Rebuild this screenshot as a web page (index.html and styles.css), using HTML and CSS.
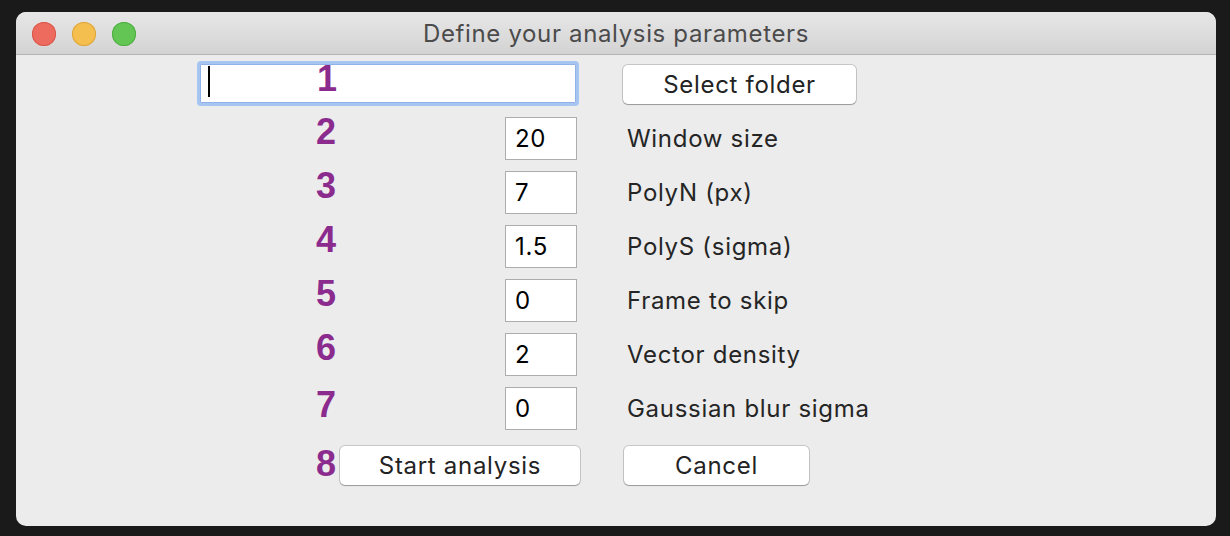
FILE: index.html
```html
<!DOCTYPE html>
<html lang="en">
<head>
<meta charset="utf-8">
<title>Define your analysis parameters</title>
<link rel="stylesheet" href="styles.css">
</head>
<body>
<div class="window">
  <div class="titlebar">
    <div class="lights">
      <span class="light light-close"></span>
      <span class="light light-min"></span>
      <span class="light light-max"></span>
    </div>
    <div class="title">Define your analysis parameters</div>
    <div></div>
  </div>
  <div class="form">
    <div class="pathfield"><span class="caret"></span></div>
    <div class="num num-1">1</div>
    <button class="btn btn-folder">Select folder</button>

    <div class="num">2</div>
    <div class="field">20</div>
    <div class="label">Window size</div>

    <div class="num">3</div>
    <div class="field">7</div>
    <div class="label">PolyN (px)</div>

    <div class="num">4</div>
    <div class="field">1.5</div>
    <div class="label">PolyS (sigma)</div>

    <div class="num">5</div>
    <div class="field">0</div>
    <div class="label">Frame to skip</div>

    <div class="num">6</div>
    <div class="field">2</div>
    <div class="label">Vector density</div>

    <div class="num num-7">7</div>
    <div class="field">0</div>
    <div class="label">Gaussian blur sigma</div>

    <div class="num num-8">8</div>
    <button class="btn btn-start">Start analysis</button>
    <button class="btn btn-cancel">Cancel</button>
  </div>
</div>
</body>
</html>
```

FILE: styles.css
```css
* { box-sizing: border-box; }

body {
  margin: 0;
  padding: 12px 14px 10px 16px;
  background: #1a1a1a;
  font-family: "Inter", "Liberation Sans", sans-serif;
}

.window {
  width: 1200px;
  height: 514px;
  border-radius: 10px;
  overflow: hidden;
  background: #ececec;
  display: flex;
  flex-direction: column;
}

.titlebar {
  height: 43px;
  flex: none;
  display: grid;
  grid-template-columns: 1fr auto 1fr;
  align-items: center;
  background: linear-gradient(#e8e7e8, #d4d3d4);
  border-bottom: 1px solid #b4b4b4;
}

.lights {
  display: flex;
  gap: 16px;
  padding-left: 16px;
  padding-top: 1px;
}

.light {
  width: 24px;
  height: 24px;
  border-radius: 50%;
}
.light-close { background: #ed6a5e; box-shadow: inset 0 0 0 1px #d9574b; }
.light-min { background: #f5bf4f; box-shadow: inset 0 0 0 1px #dca53a; }
.light-max { background: #62c554; box-shadow: inset 0 0 0 1px #4fad42; }

.title {
  font-size: 24px;
  letter-spacing: 0.65px;
  color: #4b4b4b;
  padding-top: 1px;
}

.form {
  display: grid;
  grid-template-columns: 119px 24px 165px 74px 44px auto;
  grid-template-rows: 45px repeat(6, 43px) 44px;
  row-gap: 11px;
  padding: 6px 0 0 181px;
  font-size: 24px;
  letter-spacing: 0.7px;
}

.pathfield {
  grid-row: 1;
  grid-column: 1 / 5;
  background: #fff;
  border: 3px solid #a6c5f1;
  border-radius: 4px;
  box-shadow: inset 0 0 0 1px #8fb2e8;
  padding: 2px 0 0 8px;
  display: flex;
  align-items: flex-start;
}

.caret {
  width: 2px;
  height: 31px;
  background: #000;
}

.num {
  grid-column: 2;
  font-family: "Liberation Sans", Arial, sans-serif;
  font-weight: bold;
  font-size: 36px;
  line-height: 36px;
  letter-spacing: 0;
  color: #8a2b8d;
  margin-top: -3px;
}

.num-1 {
  grid-row: 1;
  margin-top: 0;
  position: relative;
  left: 1px;
}
.num-7 { margin-top: 0; }
.num-8 { margin-top: 5px; }

.field {
  grid-column: 4;
  width: 72px;
  height: 43px;
  background: #fff;
  border: 1px solid #adadad;
  color: #000;
  padding-left: 9px;
  line-height: 41px;
}

.label {
  grid-column: 6;
  align-self: center;
  padding-left: 4px;
  color: #252525;
}

.btn {
  font: inherit;
  letter-spacing: inherit;
  color: #232323;
  background: #fff;
  border: none;
  border-radius: 5px;
  height: 39px;
  padding: 0;
  box-shadow: 0 0 0 1px rgba(0, 0, 0, 0.16), 0 1px 1px rgba(0, 0, 0, 0.22);
}

.btn-folder {
  grid-row: 1;
  grid-column: 6;
  width: 233px;
  align-self: center;
  margin-top: 2px;
}

.btn-start {
  grid-column: 3 / 5;
  width: 240px;
  align-self: end;
}

.btn-cancel {
  grid-column: 6;
  width: 185px;
  margin-left: 1px;
  align-self: end;
}
```
